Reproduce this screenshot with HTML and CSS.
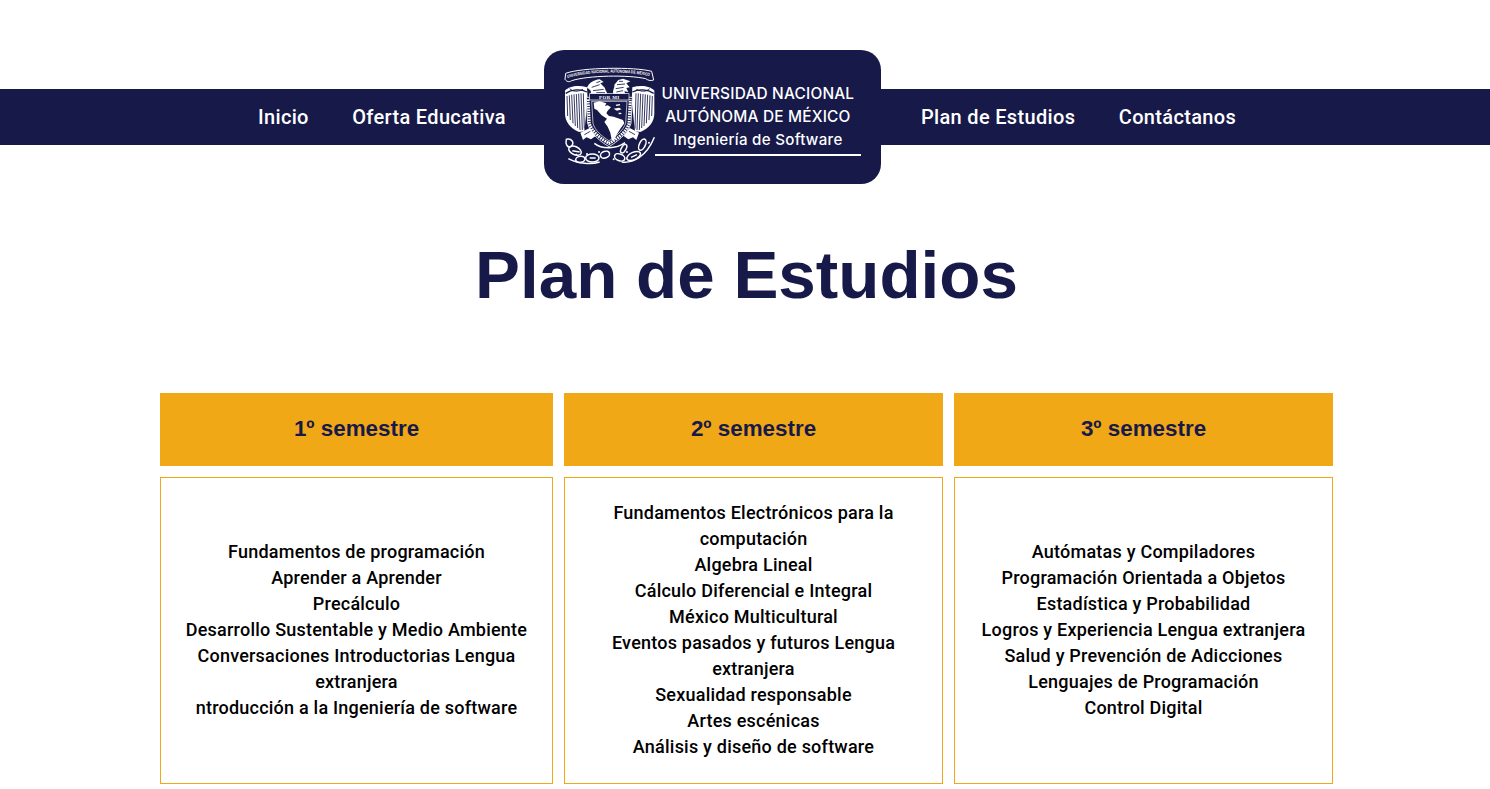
FILE: index.html
```html
<!DOCTYPE html>
<html lang="es">
<head>
<meta charset="utf-8">
<title>Plan de Estudios</title>
<link rel="stylesheet" href="styles.css">
</head>
<body>
<header class="site-header">
  <nav class="nav-band">
    <a class="nav-link" href="#">Inicio</a>
    <a class="nav-link nav-link-last" href="#">Oferta Educativa</a>
    <div class="logo">
      <svg class="crest" viewBox="0 0 330 330" aria-hidden="true">
        <!-- banner -->
        <path d="M32 40 C80 22 240 20 290 34 L296 60 C286 64 278 60 272 56 C220 44 100 46 50 62 C42 68 34 64 30 58 Z" fill="none" stroke="#fff" stroke-width="3"/>
        <path id="arc" d="M38 54 C100 34 220 32 290 50" fill="none"/>
        <text class="crest-banner"><textPath href="#arc" textLength="248" lengthAdjust="spacingAndGlyphs">UNIVERSIDAD NACIONAL AUTONOMA DE MEXICO</textPath></text>
        <!-- eagle head -->
        <path d="M96 84 C100 70 116 60 134 58 L146 66 L136 70 L150 84 C150 92 158 96 156 104 L104 104 C112 96 106 88 96 84 Z" fill="#fff"/>
        <g stroke="#171949" stroke-width="2.5" fill="none">
          <path d="M110 82 L134 74"/><path d="M114 92 L146 88"/><path d="M124 98 L150 98"/><path d="M124 68 L136 64"/>
        </g>
        <!-- condor head -->
        <path d="M176 104 C170 92 180 84 178 74 L190 60 L204 56 L226 64 L214 70 L224 82 L214 84 L220 96 L208 94 L212 104 Z" fill="#fff"/>
        <g stroke="#171949" stroke-width="2.5" fill="none">
          <path d="M186 74 L210 72"/><path d="M182 86 L206 82"/><path d="M184 96 L204 92"/><path d="M192 64 L204 64"/>
        </g>
        <!-- left wing -->
        <path d="M96 82 C70 74 42 78 30 92 L30 160 C30 186 46 206 72 216 L88 214 L98 122 Z" fill="#fff"/>
        <g stroke="#171949" stroke-width="2.6" fill="none">
          <path d="M36 108 L38 168"/><path d="M43 106 L46 180"/><path d="M50 104 L54 190"/><path d="M57 103 L61 198"/><path d="M64 102 L68 204"/><path d="M71 101 L75 210"/><path d="M78 100 L82 210"/><path d="M85 100 L88 206"/>
          <path d="M32 100 C50 88 76 86 96 96" stroke-width="4"/>
          <path d="M44 86 C56 96 66 96 84 88"/>
        </g>
        <!-- right wing -->
        <path d="M232 82 C258 74 286 78 298 92 L298 160 C298 186 282 206 256 216 L240 214 L230 122 Z" fill="#fff"/>
        <g stroke="#171949" stroke-width="2.6" fill="none">
          <path d="M292 108 L290 168"/><path d="M285 106 L282 180"/><path d="M278 104 L274 190"/><path d="M271 103 L267 198"/><path d="M264 102 L260 204"/><path d="M257 101 L253 210"/><path d="M250 100 L246 210"/><path d="M243 100 L240 206"/>
          <path d="M296 100 C278 88 252 86 232 96" stroke-width="4"/>
          <path d="M284 86 C272 96 262 96 244 88"/>
        </g>
        <!-- shield with lettered border -->
        <path d="M94 112 L232 112 L228 190 C218 222 186 246 162 260 C138 246 106 222 98 190 Z" fill="#171949" stroke="#fff" stroke-width="2.5"/>
        <path d="M99 118 L103 190 C112 218 140 238 162 250 C184 238 214 218 222 190 L226 118" fill="none" stroke="#fff" stroke-width="9" stroke-dasharray="5 2.5"/>
        <path d="M110 124 L216 124 L212 190 C204 212 182 230 162 242 C142 230 120 212 114 190 Z" fill="#171949" stroke="#fff" stroke-width="2"/>
        <rect x="104" y="101" width="118" height="19" fill="#171949" stroke="#fff" stroke-width="2"/>
        <text class="crest-motto" x="163" y="116" text-anchor="middle">POR MI</text>
        <!-- americas -->
        <path d="M116 128 L134 124 L154 130 L150 138 L158 136 L168 142 L158 152 L154 160 L162 168 L176 170 L204 180 L208 190 L196 206 L184 226 L176 244 L170 240 L166 218 L158 200 L148 186 L156 176 L140 166 L126 150 L118 146 Z" fill="#fff"/>
        <path d="M176 146 l16 -3 l8 5 l-14 4 Z M190 158 l8 0 l2 4 l-8 1 Z M182 134 l12 -2 l2 4 l-12 2 Z" fill="#fff"/>
        <!-- talons -->
        <path d="M76 218 L104 204 L122 228 L108 238 L94 232 L84 240 Z M252 218 L224 204 L206 228 L220 238 L234 232 L244 240 Z" fill="#fff"/>
        <g stroke="#171949" stroke-width="2.5" fill="none">
          <path d="M88 224 L106 214"/><path d="M240 224 L222 214"/>
        </g>
        <!-- cactus and laurel -->
        <g fill="none" stroke="#fff" stroke-width="4.5">
          <ellipse cx="60" cy="272" rx="20" ry="12" transform="rotate(25 60 272)"/>
          <ellipse cx="76" cy="298" rx="14" ry="9" transform="rotate(-10 76 298)"/>
          <ellipse cx="112" cy="294" rx="20" ry="12"/>
          <ellipse cx="150" cy="284" rx="14" ry="10" transform="rotate(-20 150 284)"/>
          <ellipse cx="194" cy="292" rx="16" ry="10" transform="rotate(20 194 292)"/>
          <ellipse cx="236" cy="288" rx="22" ry="11" transform="rotate(-25 236 288)"/>
          <ellipse cx="262" cy="254" rx="9" ry="18" transform="rotate(25 262 254)"/>
          <ellipse cx="206" cy="266" rx="7" ry="14" transform="rotate(30 206 266)"/>
          <path d="M34 238 C50 234 60 248 48 260 C38 264 30 254 34 238 Z"/>
          <path d="M118 250 C140 268 184 268 210 248"/>
          <path d="M40 296 C70 312 110 314 134 306"/>
          <path d="M200 306 C232 310 274 292 298 232"/>
          <path d="M52 272 L74 276 M104 294 L122 294 M228 292 L246 284"/>
        </g>
        <g fill="#fff">
          <circle cx="64" cy="284" r="3"/><circle cx="96" cy="282" r="3"/><circle cx="132" cy="276" r="3"/><circle cx="176" cy="298" r="3"/><circle cx="216" cy="276" r="3"/><circle cx="282" cy="248" r="3"/>
        </g>
      </svg>
      <div class="logo-text">
        <div class="logo-title">UNIVERSIDAD NACIONAL</div>
        <div class="logo-title">AUTÓNOMA DE MÉXICO</div>
        <div class="logo-sub">Ingeniería de Software</div>
        <div class="logo-rule"></div>
      </div>
    </div>
    <a class="nav-link nav-link-first" href="#">Plan de Estudios</a>
    <a class="nav-link" href="#">Contáctanos</a>
  </nav>
</header>
<main class="content">
  <h1 class="page-title">Plan de Estudios</h1>
  <section class="semesters">
    <h2 class="sem-head">1º semestre</h2>
    <h2 class="sem-head">2º semestre</h2>
    <h2 class="sem-head">3º semestre</h2>
    <div class="sem-body"><div>
      <p>Fundamentos de programación</p>
      <p>Aprender a Aprender</p>
      <p>Precálculo</p>
      <p>Desarrollo Sustentable y Medio Ambiente</p>
      <p>Conversaciones Introductorias Lengua extranjera</p>
      <p>ntroducción a la Ingeniería de software</p>
    </div></div>
    <div class="sem-body"><div>
      <p>Fundamentos Electrónicos para la computación</p>
      <p>Algebra Lineal</p>
      <p>Cálculo Diferencial e Integral</p>
      <p>México Multicultural</p>
      <p>Eventos pasados y futuros Lengua extranjera</p>
      <p>Sexualidad responsable</p>
      <p>Artes escénicas</p>
      <p>Análisis y diseño de software</p>
    </div></div>
    <div class="sem-body"><div>
      <p>Autómatas y Compiladores</p>
      <p>Programación Orientada a Objetos</p>
      <p>Estadística y Probabilidad</p>
      <p>Logros y Experiencia Lengua extranjera</p>
      <p>Salud y Prevención de Adicciones</p>
      <p>Lenguajes de Programación</p>
      <p>Control Digital</p>
    </div></div>
  </section>
</main>
</body>
</html>
```
FILE: styles.css
```css
* { box-sizing: border-box; }
html, body { margin: 0; padding: 0; background: #fff; }
body { font-family: Roboto, "Liberation Sans", sans-serif; color: #000; overflow: hidden; height: 789px; }

.site-header { padding-top: 89px; }
.nav-band {
  height: 56px;
  background: #171949;
  display: flex;
  align-items: center;
  justify-content: flex-start;
  padding-left: 258px;
  gap: 43.5px;
}
.nav-link {
  color: #fff;
  text-decoration: none;
  font-family: Roboto, sans-serif;
  font-weight: 500;
  font-size: 20px;
  letter-spacing: 0.33px;
  white-space: nowrap;
}
.nav-link-last { margin-right: -5.5px; }
.nav-link-first { margin-left: -3.5px; }

.logo {
  width: 337px;
  height: 134px;
  flex: none;
  background: #171949;
  border-radius: 20px;
  display: flex;
  align-items: flex-start;
  padding: 10px 0 0 11px;
}
.crest { width: 110px; height: 110px; flex: none; }
.crest-banner { font-family: "Liberation Sans", sans-serif; font-size: 13px; font-weight: 700; fill: #fff; }
.crest-motto { font-family: "Liberation Serif", serif; font-size: 15px; font-weight: 700; fill: #fff; letter-spacing: 1px; }

.logo-text {
  margin-left: -10px;
  padding-top: 22px;
  color: #fff;
  font-family: Inter, sans-serif;
  text-align: center;
  width: 206px;
}
.logo-title { font-size: 15.4px; line-height: 23px; font-weight: 500; letter-spacing: 0.2px; white-space: nowrap; }
.logo-sub { font-size: 15.1px; line-height: 23px; font-weight: 500; letter-spacing: 0.3px; white-space: nowrap; }
.logo-rule { height: 2px; background: #fff; margin-top: 3px; }

.content { width: 1173px; margin-left: 160px; }
.page-title {
  margin: 88px 0 0;
  height: 160px;
  text-align: center;
  font-family: "Liberation Sans", sans-serif;
  font-weight: 700;
  font-size: 67.4px;
  line-height: 83px;
  color: #171949;
}
.semesters {
  display: grid;
  grid-template-columns: 393px 379px 379px;
  grid-template-rows: 73px 307px;
  gap: 11px;
}
.sem-head {
  margin: 0;
  background: #f1a817;
  display: flex;
  align-items: center;
  justify-content: center;
  padding-bottom: 2px;
  font-family: "Liberation Sans", sans-serif;
  font-weight: 700;
  font-size: 22.4px;
  color: #171949;
}
.sem-body {
  border: 1px solid #f1a817;
  display: flex;
  align-items: center;
  justify-content: center;
  text-align: center;
  padding: 0 20px 2px;
  font-size: 18px;
  font-weight: 500;
  letter-spacing: 0.22px;
  line-height: 26px;
}
.sem-body p { margin: 0; }
```
